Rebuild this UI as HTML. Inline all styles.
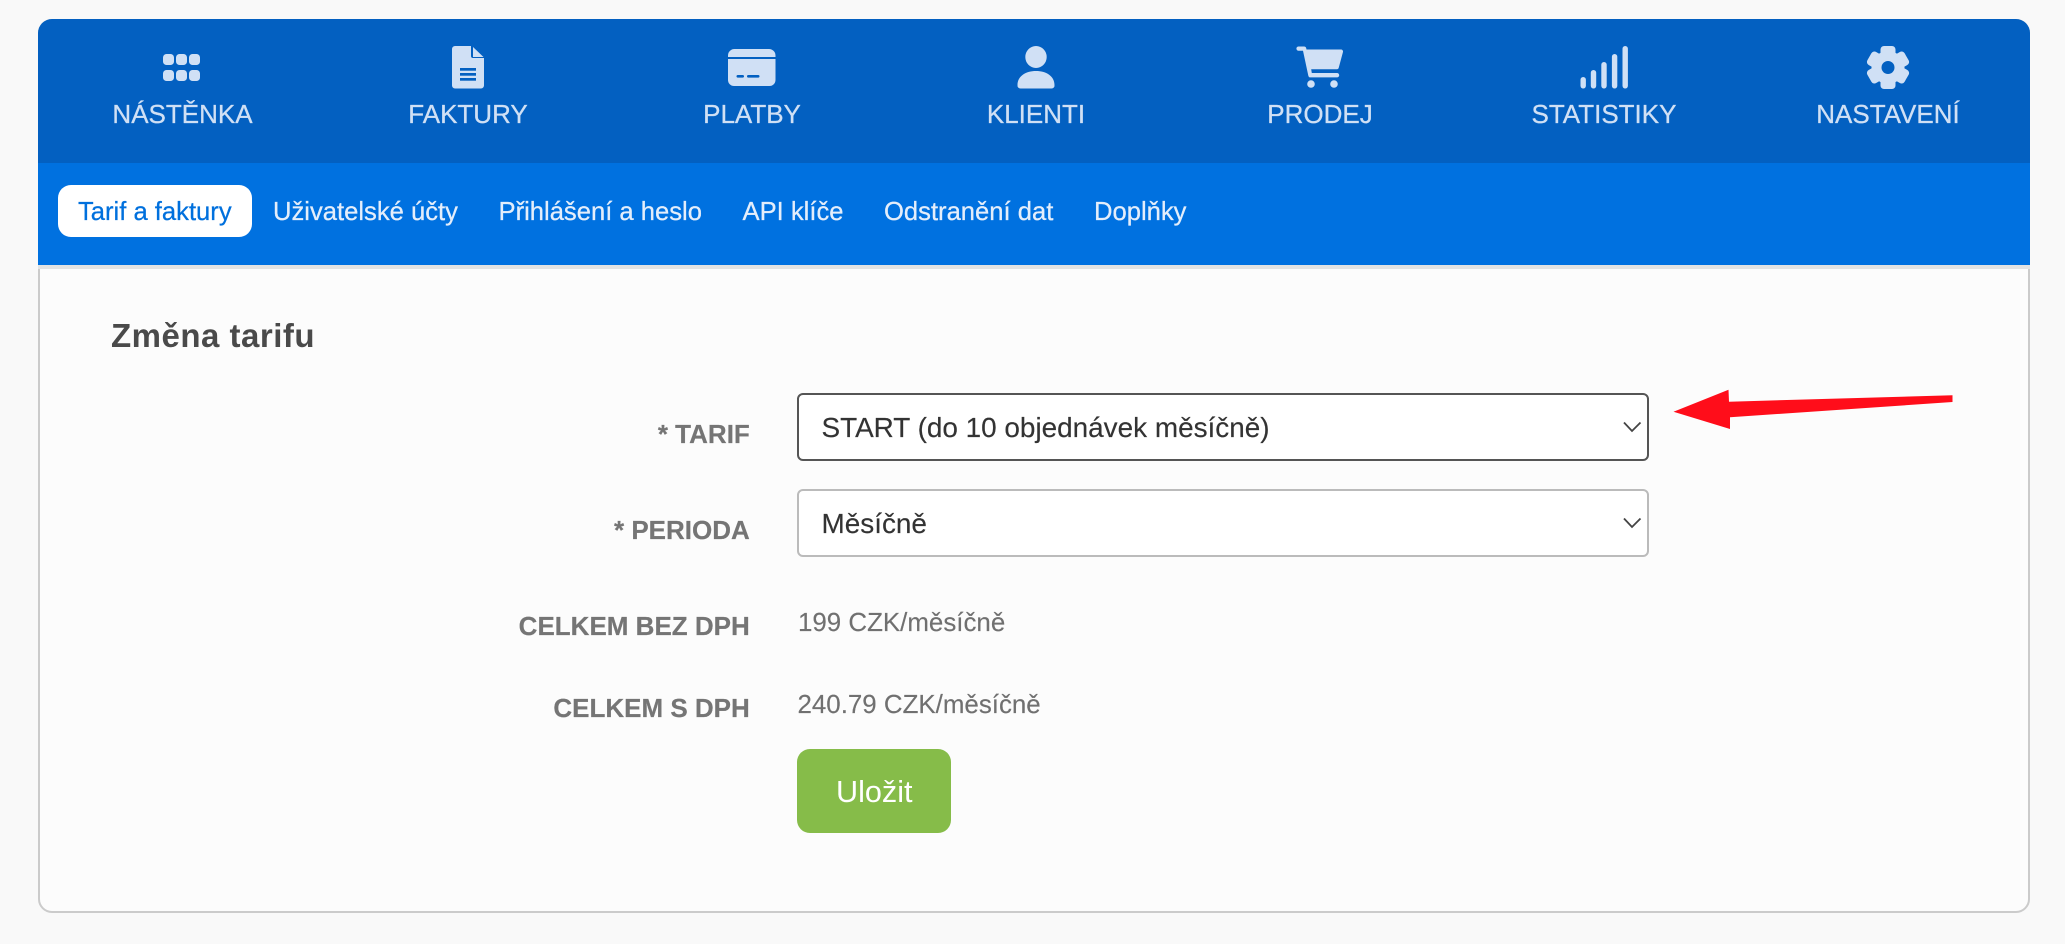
<!DOCTYPE html>
<html lang="cs">
<head>
<meta charset="utf-8">
<title>Změna tarifu</title>
<style>
html,body{margin:0;padding:0;width:2065px;height:944px;overflow:hidden;background:#f9f9f9}
.abs{position:absolute;box-sizing:border-box}
svg{position:absolute;left:0;top:0}
text{font-family:"Liberation Sans",Arial,sans-serif}
.nav{font-size:26px;fill:#d0e0f5;stroke:#d0e0f5;stroke-width:.25px;text-anchor:middle}
.sub{font-size:25.6px;fill:#e4eefb;stroke:#e4eefb;stroke-width:.25px}
.lab{font-size:26px;font-weight:700;fill:#757575;stroke:#757575;stroke-width:.2px;text-anchor:end}
.val{font-size:25.9px;fill:#707070;stroke:#707070;stroke-width:.15px}
.sel{font-size:27.9px;fill:#333;stroke:#333;stroke-width:.15px}
</style>
</head>
<body>
<div class="abs" style="left:38px;top:19px;width:1992px;height:894px;background:#fcfcfc;border:2px solid #cbcbcb;border-radius:14px"></div>
<div class="abs" style="left:38px;top:19px;width:1992px;height:144px;background:#0360c1;border-radius:14px 14px 0 0"></div>
<div class="abs" style="left:38px;top:163px;width:1992px;height:102px;background:#0071e0"></div>
<div class="abs" style="left:38px;top:265px;width:1992px;height:4px;background:#e2e3e3"></div>
<div class="abs" style="left:58px;top:185px;width:194px;height:52px;background:#fff;border-radius:13px"></div>
<div class="abs" style="left:797px;top:393px;width:852px;height:68px;background:#fff;border:2px solid #555;border-radius:6px"></div>
<div class="abs" style="left:797px;top:489px;width:852px;height:68px;background:#fff;border:2px solid #bbb;border-radius:6px"></div>
<div class="abs" style="left:797px;top:749px;width:154px;height:84px;background:#86bc49;border-radius:13px"></div>

<svg width="2065" height="944" viewBox="0 0 2065 944" xmlns="http://www.w3.org/2000/svg">
  <!-- icons -->
  <g fill="#d0e0f5">
    <!-- grid -->
    <rect x="163" y="54" width="11" height="11" rx="3.500"/><rect x="176" y="54" width="11" height="11" rx="3.500"/><rect x="189" y="54" width="11" height="11" rx="3.500"/>
    <rect x="163" y="70" width="11" height="11" rx="3.500"/><rect x="176" y="70" width="11" height="11" rx="3.500"/><rect x="189" y="70" width="11" height="11" rx="3.500"/>
    <!-- document -->
    <path d="M455 46H471V56a2 2 0 0 0 2 2H484V85.500a3 3 0 0 1-3 3H455a3 3 0 0 1-3-3V49a3 3 0 0 1 3-3z"/>
    <path d="M473 47L483.500 57H473z"/>
    <!-- credit card -->
    <path d="M735 49H769a6.500 6.500 0 0 1 6.500 6.500V57H728V55.500A6.500 6.500 0 0 1 735 49z"/>
    <path d="M728 59H775.500V80a6 6 0 0 1-6 6H734a6 6 0 0 1-6-6z"/>
    <!-- person -->
    <ellipse cx="1036" cy="57" rx="10.700" ry="11"/>
    <path d="M1017.500 85C1017.500 76 1026 71 1036 71S1054.500 76 1054.500 85a3 3 0 0 1-3 3.500H1020.500a3 3 0 0 1-3-3.500z"/>
    <!-- cart -->
    <path d="M1298.500 46.500H1304a2.500 2.500 0 0 1 2.300 2L1306.500 49.500H1341a2 2 0 0 1 2 2.400L1338.800 67.500a2 2 0 0 1-2 1.700H1311.200L1311.800 73H1337a2.200 2.200 0 0 1 0 4.400H1310.500a2.200 2.200 0 0 1-2.200-1.800L1303 50.700H1298.500a2.100 2.100 0 0 1 0-4.200z"/>
    <circle cx="1311" cy="84" r="3.800"/><circle cx="1334" cy="84" r="3.800"/>
    <!-- statistics bars -->
    <rect x="1580.500" y="77" width="5.400" height="11.500" rx="2.700"/>
    <rect x="1590.800" y="70" width="5.400" height="18.500" rx="2.700"/>
    <rect x="1601.300" y="62" width="5.400" height="26.500" rx="2.700"/>
    <rect x="1611.900" y="54" width="5.400" height="34.500" rx="2.700"/>
    <rect x="1622.500" y="46" width="5.400" height="42.500" rx="2.700"/>
    <!-- gear -->
    <circle cx="1888" cy="67.500" r="16.500"/>
    <g>
      <rect x="1880.500" y="46" width="15" height="12" rx="3.500"/>
      <rect x="1880.500" y="46" width="15" height="12" rx="3.500" transform="rotate(60 1888 67.500)"/>
      <rect x="1880.500" y="46" width="15" height="12" rx="3.500" transform="rotate(120 1888 67.500)"/>
      <rect x="1880.500" y="46" width="15" height="12" rx="3.500" transform="rotate(180 1888 67.500)"/>
      <rect x="1880.500" y="46" width="15" height="12" rx="3.500" transform="rotate(240 1888 67.500)"/>
      <rect x="1880.500" y="46" width="15" height="12" rx="3.500" transform="rotate(300 1888 67.500)"/>
    </g>
  </g>
  <circle cx="1888" cy="67.500" r="6.500" fill="#0360c1"/>
  <g fill="#0360c1">
    <rect x="460" y="68" width="16" height="2.700"/><rect x="460" y="73" width="16" height="2.700"/><rect x="460" y="78" width="16" height="2.700"/>
    <rect x="736.500" y="75" width="7.500" height="2.600" rx="1.300"/><rect x="747" y="75" width="12.500" height="2.600" rx="1.300"/>
  </g>

  <!-- main nav -->
  <text class="nav" x="182.500" y="123">NÁSTĚNKA</text>
  <text class="nav" x="468" y="123">FAKTURY</text>
  <text class="nav" x="752" y="123">PLATBY</text>
  <text class="nav" x="1036" y="123">KLIENTI</text>
  <text class="nav" x="1320" y="123">PRODEJ</text>
  <text class="nav" x="1604" y="123">STATISTIKY</text>
  <text class="nav" x="1888" y="123">NASTAVENÍ</text>

  <!-- sub nav -->
  <text class="sub" x="78" y="220" style="fill:#0070dd;stroke:#0070dd">Tarif a faktury</text>
  <text class="sub" x="273" y="220">Uživatelské účty</text>
  <text class="sub" x="498.500" y="220">Přihlášení a heslo</text>
  <text class="sub" x="742.500" y="220">API klíče</text>
  <text class="sub" x="884" y="220">Odstranění dat</text>
  <text class="sub" x="1094" y="220">Doplňky</text>

  <!-- form -->
  <text x="111" y="347" font-size="33" font-weight="700" letter-spacing=".5" fill="#4a4a4a">Změna tarifu</text>
  <text class="lab" x="749.800" y="443">* TARIF</text>
  <text class="lab" x="749.800" y="539">* PERIODA</text>
  <text class="lab" x="749.800" y="635">CELKEM BEZ DPH</text>
  <text class="lab" x="749.800" y="717">CELKEM S DPH</text>
  <text class="sel" x="821.500" y="437">START (do 10 objednávek měsíčně)</text>
  <text class="sel" x="821.500" y="533">Měsíčně</text>
  <path d="M1624 422.500L1632 431L1640.500 422.500" fill="none" stroke="#444" stroke-width="1.800"/>
  <path d="M1624 518.500L1632 527L1640.500 518.500" fill="none" stroke="#444" stroke-width="1.800"/>
  <text class="val" x="798" y="631">199 CZK/měsíčně</text>
  <text class="val" x="797.500" y="713">240.79 CZK/měsíčně</text>
  <text x="836" y="802" font-size="30.600" fill="#fff">Uložit</text>

  <!-- red arrow -->
  <path d="M1673.500 411.700L1728.500 389.700L1729 401.700L1952.500 395.300V402L1730 417.300L1730 429z" fill="#ff0d1a"/>
</svg>
</body>
</html>
